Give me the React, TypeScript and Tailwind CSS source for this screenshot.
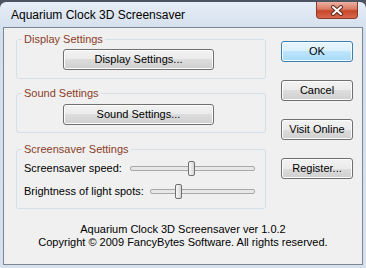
import React from "react";

function WinButton({ label, primary = false }: { label: string; primary?: boolean }) {
  return (
    <button
      className={
        primary
          ? "h-[21px] w-[72px] rounded-[3px] border border-[#3c7fb1] bg-[linear-gradient(#eaf6fd_0%,#d9f0fc_50%,#bee6fd_50%,#a7d9f5_100%)] text-[11px] leading-[13px] text-black shadow-[inset_0_0_0_1px_#f4fbff]"
          : "h-[21px] w-[72px] rounded-[3px] border border-[#707070] bg-[linear-gradient(#f2f2f2_0%,#ebebeb_50%,#dddddd_50%,#cfcfcf_100%)] text-[11px] leading-[13px] text-black shadow-[inset_0_0_0_1px_#fcfcfc]"
      }
    >
      {label}
    </button>
  );
}

function GroupButton({ label }: { label: string }) {
  return (
    <button className="ml-[46px] h-[21px] w-[151px] rounded-[3px] border border-[#707070] bg-[linear-gradient(#f2f2f2_0%,#ebebeb_50%,#dddddd_50%,#cfcfcf_100%)] text-[11px] leading-[13px] text-black shadow-[inset_0_0_0_1px_#fcfcfc]">
      {label}
    </button>
  );
}

function Slider({ width, thumb }: { width: string; thumb: string }) {
  return (
    <div className={`relative h-[5px] ${width} rounded-[2px] border border-[#a8a8a8] bg-[#e7e7e7]`}>
      <div
        className={`absolute top-[-6px] ${thumb} h-[15px] w-[7px] rounded-[2px] border border-[#6f6f6f] bg-[linear-gradient(to_right,#f7f7f7,#d8d8d8)]`}
      />
    </div>
  );
}

export default function App() {
  return (
    <div className="h-[268px] w-[366px] overflow-hidden bg-[#4b5561] font-['Liberation_Sans',Arial,sans-serif] text-[11px] leading-[13px] text-black">
      <div className="mt-[2px] flex h-[266px] flex-col rounded-t-[6px] bg-[linear-gradient(#e6eef7,#d3dfec_30px,#d6e1ed)]">
        {/* title bar */}
        <div className="flex h-[25px] justify-between pl-[11px] pr-[8px]">
          <span className="mt-[6px] text-[12px] leading-[15px]">Aquarium Clock 3D Screensaver</span>
          <div className="flex h-[17px] w-[42px] items-center justify-center rounded-b-[4px] border border-t-0 border-[#8a3a2a] bg-[linear-gradient(#ebb2a3,#d97a62_45%,#c7452a_55%,#d8694c)]">
            <svg width="14" height="11" viewBox="0 0 14 11">
              <path d="M3 2 L11 9 M11 2 L3 9" stroke="#5a2a22" strokeWidth="4" strokeLinecap="round" />
              <path d="M3 2 L11 9 M11 2 L3 9" stroke="#ffffff" strokeWidth="2" strokeLinecap="round" />
            </svg>
          </div>
        </div>

        {/* client area */}
        <div className="ml-[3px] flex w-[360px] flex-1 flex-col border border-[#7b8593] bg-[#f0f0f0]">
          <div className="flex">
            <div className="ml-[12px] mt-[5px] w-[250px]">
              <fieldset className="rounded-[3px] border border-[#d5dfe5] pb-[8px]">
                <legend className="ml-[5px] px-[2px] text-[#8b3d28]">Display Settings</legend>
                <div className="mt-[3px]">
                  <GroupButton label="Display Settings..." />
                </div>
              </fieldset>

              <fieldset className="mt-[8px] rounded-[3px] border border-[#d5dfe5] pb-[7px]">
                <legend className="ml-[5px] px-[2px] text-[#8b3d28]">Sound Settings</legend>
                <div className="mt-[4px]">
                  <GroupButton label="Sound Settings..." />
                </div>
              </fieldset>

              <fieldset className="mt-[10px] rounded-[3px] border border-[#d5dfe5] pb-[9px]">
                <legend className="ml-[5px] px-[2px] text-[#8b3d28]">Screensaver Settings</legend>
                <div className="mt-[5px] flex h-[15px] items-center justify-between pl-[7px] pr-[10px]">
                  <span>Screensaver speed:</span>
                  <Slider width="w-[125px]" thumb="left-[57px]" />
                </div>
                <div className="mt-[8px] flex h-[15px] items-center justify-between pl-[7px] pr-[10px]">
                  <span>Brightness of light spots:</span>
                  <Slider width="w-[105px]" thumb="left-[24px]" />
                </div>
              </fieldset>
            </div>

            <div className="ml-[15px] mt-[13px] flex flex-col gap-[18px]">
              <WinButton label="OK" primary />
              <WinButton label="Cancel" />
              <WinButton label="Visit Online" />
              <WinButton label="Register..." />
            </div>
          </div>

          <div className="mt-[14px] text-center">
            <div>Aquarium Clock 3D Screensaver ver 1.0.2</div>
            <div>Copyright © 2009 FancyBytes Software. All rights reserved.</div>
          </div>
        </div>
        <div className="h-[3px]" />
      </div>
    </div>
  );
}
